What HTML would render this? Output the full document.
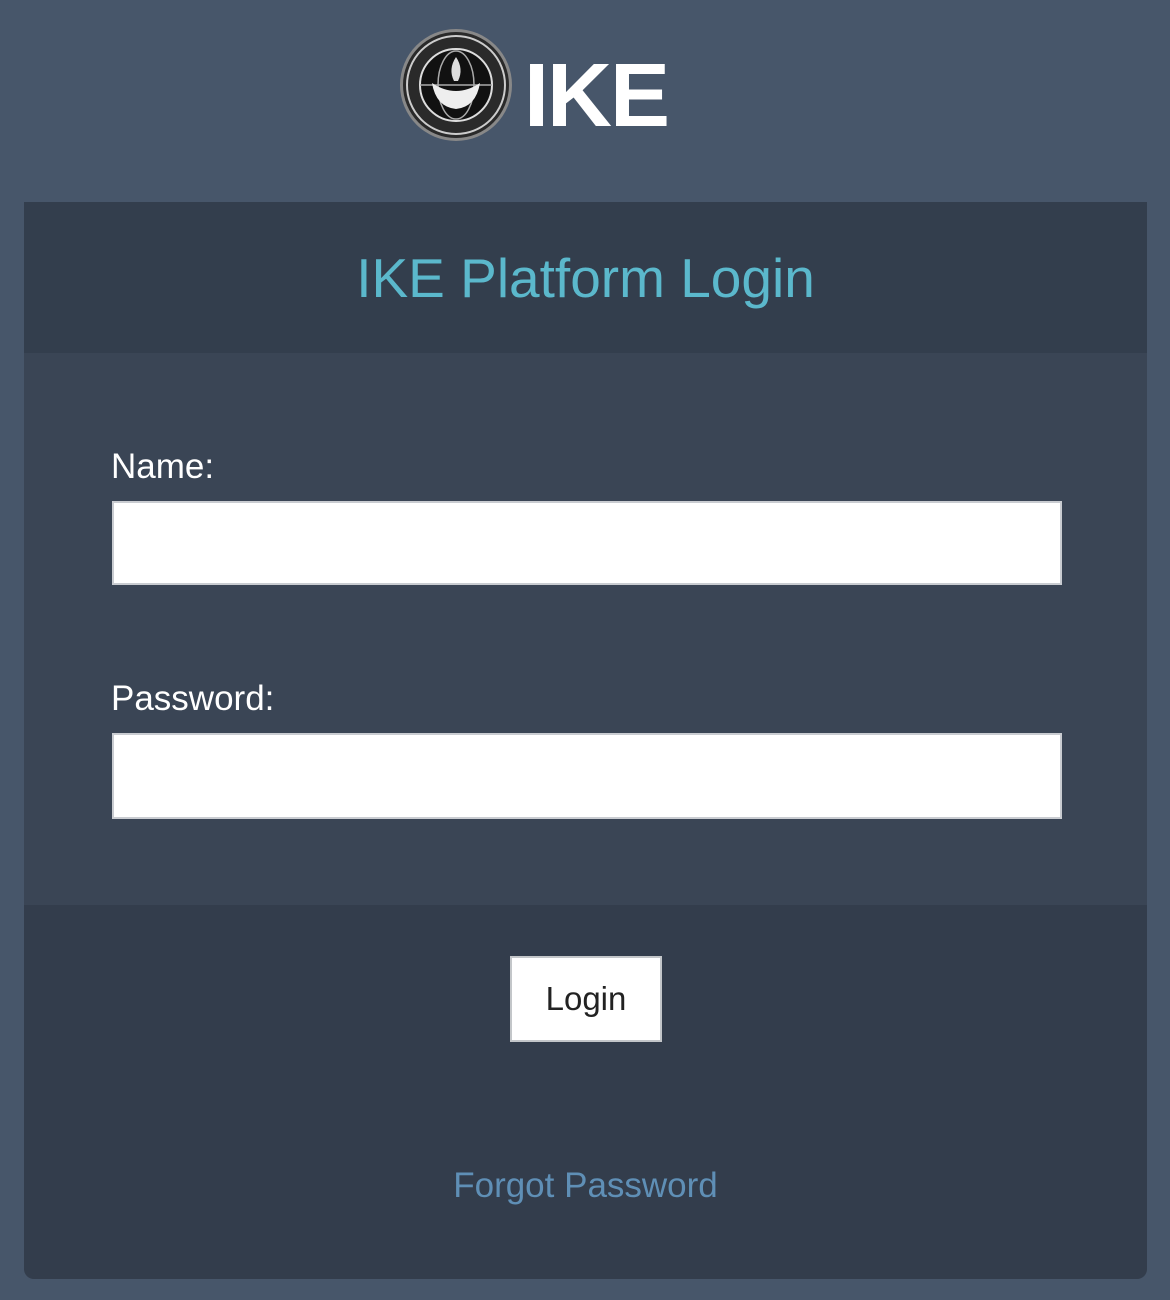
<!DOCTYPE html>
<html><head><meta charset="utf-8"><style>
html,body{margin:0;padding:0;}
body{width:1170px;height:1300px;background:#47566a;font-family:"Liberation Sans",sans-serif;position:relative;overflow:hidden;}
.logo{position:absolute;left:398px;top:27px;}
.ike{position:absolute;left:524px;top:46px;color:#fff;font-weight:bold;font-size:90px;line-height:100px;letter-spacing:-2px;}
.card{position:absolute;left:24px;top:202px;width:1123px;height:1077px;background:#333d4c;border-radius:0 0 10px 10px;}
.hdr{height:151px;background:#333e4d;text-align:center;}
.hdr h1{margin:0;padding-top:46px;font-weight:normal;font-size:55px;color:#5bb8cc;line-height:60px;}
.bd{position:absolute;top:151px;left:0;width:1123px;height:552px;background:#3a4555;}
.lbl{position:absolute;left:87px;color:#fff;font-size:35px;}
.inp{position:absolute;left:88px;width:946px;background:#fff;border:2px solid #c9ccd1;}
.btn{position:absolute;left:486px;top:754px;width:148px;height:82px;background:#fff;border:2px solid #c3c6c9;text-align:center;line-height:82px;font-size:33px;color:#222;}
.fp{position:absolute;top:964px;width:100%;text-align:center;color:#5f8fb6;font-size:35px;}
</style></head><body>
<svg class="logo" width="116" height="116" viewBox="0 0 116 116">
<circle cx="58" cy="58" r="56" fill="#888"/>
<circle cx="58" cy="58" r="53" fill="#2a2a2a"/>
<circle cx="58" cy="58" r="49" fill="none" stroke="#ccc" stroke-width="2"/>
<circle cx="58" cy="58" r="36" fill="#111" stroke="#ddd" stroke-width="2"/>
<ellipse cx="58" cy="58" rx="18" ry="34" fill="none" stroke="#aaa" stroke-width="1.5"/>
<line x1="22" y1="58" x2="94" y2="58" stroke="#aaa" stroke-width="1.5"/>
<path d="M34 56 Q58 72 82 56 Q78 80 58 82 Q38 80 34 56Z" fill="#eee"/>
<path d="M58 30 Q50 42 56 54 L60 54 Q66 42 58 30Z" fill="#ddd"/>
</svg>
<div class="ike">IKE</div>
<div class="card">
<div class="hdr"><h1>IKE Platform Login</h1></div>
<div class="bd">
<div class="lbl" style="top:94px">Name:</div>
<div class="inp" style="top:148px;height:80px"></div>
<div class="lbl" style="top:326px">Password:</div>
<div class="inp" style="top:380px;height:82px"></div>
</div>
<div class="btn">Login</div>
<div class="fp">Forgot Password</div>
</div>
</body></html>
